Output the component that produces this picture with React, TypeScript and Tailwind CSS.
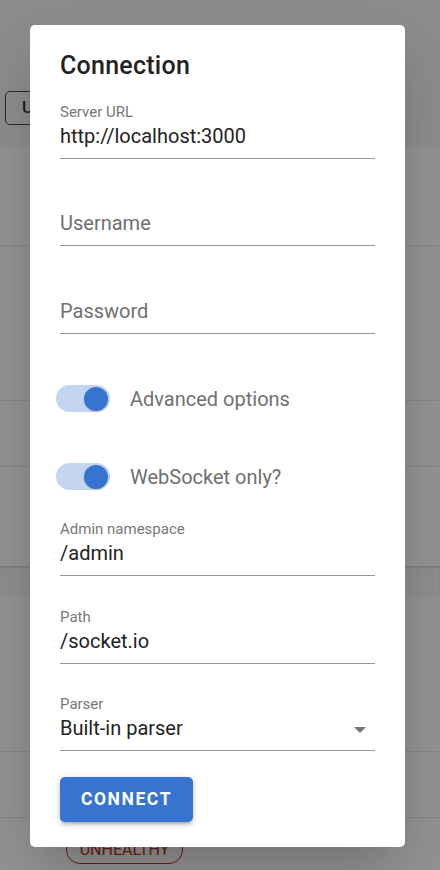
import React from 'react';

interface FieldProps {
  label?: string;
  value?: string;
  placeholder?: string;
  select?: boolean;
  className?: string;
}

function Field({ label, value, placeholder, select, className = '' }: FieldProps) {
  return (
    <div className={`border-b border-[#949494] pb-[8px] ${className}`}>
      <div className="h-[19px] text-[15px] leading-[19px] text-[#777777]">{label}</div>
      <div className="flex h-[28px] items-center justify-between">
        {value ? (
          <span className="text-[20px] leading-[28px] text-[#222222]">{value}</span>
        ) : (
          <span className="text-[20px] leading-[28px] text-[#707070]">{placeholder}</span>
        )}
        {select && (
          <svg width="12" height="6" viewBox="0 0 12 6" className="mr-[9px] mt-[3px]">
            <path d="M0 0 L12 0 L6 6 Z" fill="#757575" />
          </svg>
        )}
      </div>
    </div>
  );
}

function Toggle({ label, className = '' }: { label: string; className?: string }) {
  return (
    <div className={`flex h-[27px] items-center ${className}`}>
      <div className="relative ml-[-4px] h-[27px] w-[54px] rounded-full bg-[#c3d5f1]">
        <div className="absolute right-[2px] top-[1.5px] h-6 w-6 rounded-full bg-[#3674d0] shadow-sm" />
      </div>
      <span className="ml-[20px] text-[20px] leading-[28px] text-[#707070]">{label}</span>
    </div>
  );
}

export default function App() {
  return (
    <div className="relative h-[870px] w-[440px] overflow-hidden bg-white font-['Roboto',sans-serif]">
      {/* page behind the dialog */}
      <div className="h-[147px] bg-[#f5f5f5] pl-[5px] pt-[91px] shadow-md">
        <button className="h-[34px] w-[70px] rounded-[5px] border border-[#444] pl-[16px] text-left text-[17px] font-medium text-[#333]">
          U
        </button>
      </div>
      <div className="bg-white">
        <div className="h-[99px] border-b border-[#e6e6e6]" />
        <div className="h-[155px] border-b border-[#e6e6e6]" />
        <div className="h-[66px] border-b border-[#e6e6e6]" />
        <div className="h-[99px]" />
      </div>
      <div className="h-[31px] bg-[#f7f7f7] shadow-[inset_0_2px_2px_rgba(0,0,0,0.12)]" />
      <div className="bg-white">
        <div className="h-[155px] border-b border-[#e6e6e6]" />
        <div className="h-[66px] border-b border-[#e6e6e6]" />
        <div className="pl-[66px] pt-[18px]">
          <span className="inline-flex h-[28px] w-[117px] items-center justify-center rounded-full border border-[#b8322a] text-[16px] text-[#b8322a]">
            UNHEALTHY
          </span>
        </div>
      </div>

      {/* scrim */}
      <div className="absolute inset-0 bg-black/[0.43]" />

      {/* dialog */}
      <div className="absolute left-[30px] top-[25px] w-[375px] rounded-[5px] bg-white px-[30px] pb-[25px] pt-[25px] shadow-2xl">
        <h2 className="text-[25px] font-medium leading-[32px] tracking-[0.01em] text-[#222222]">Connection</h2>
        <Field className="mt-[21px]" label="Server URL" value="http://localhost:3000" />
        <Field className="mt-[31px]" placeholder="Username" />
        <Field className="mt-[32px]" placeholder="Password" />
        <Toggle className="mt-[51px]" label="Advanced options" />
        <Toggle className="mt-[51px]" label="WebSocket only?" />
        <Field className="mt-[30px]" label="Admin namespace" value="/admin" />
        <Field className="mt-[32px]" label="Path" value="/socket.io" />
        <Field className="mt-[31px]" label="Parser" value="Built-in parser" select />
        <button className="mt-[26px] flex h-[45px] w-[133px] items-center justify-center rounded-[5px] bg-[#3674d0] text-[17.5px] font-bold tracking-[0.09em] text-white shadow-[0_3px_3px_-2px_rgba(0,0,0,0.2),0_3px_4px_0_rgba(0,0,0,0.14),0_1px_8px_0_rgba(0,0,0,0.12)]">
          CONNECT
        </button>
      </div>
    </div>
  );
}
